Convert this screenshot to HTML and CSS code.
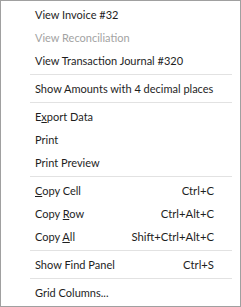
FILE: index.html
```html
<!DOCTYPE html>
<html>
<head>
<meta charset="utf-8">
<link rel="stylesheet" href="styles.css">
</head>
<body>
<div class="menu">
  <div class="item"><span>View Invoice #32</span></div>
  <div class="item disabled"><span>View Reconciliation</span></div>
  <div class="item"><span>View Transaction Journal #320</span></div>
  <div class="sep"></div>
  <div class="item"><span>Show Amounts with 4 decimal places</span></div>
  <div class="sep"></div>
  <div class="item"><span>E<u>x</u>port Data</span></div>
  <div class="item"><span>Print</span></div>
  <div class="item"><span>Print Preview</span></div>
  <div class="sep"></div>
  <div class="item"><span><u>C</u>opy Cell</span><span class="key">Ctrl+C</span></div>
  <div class="item"><span>Copy <u>R</u>ow</span><span class="key">Ctrl+Alt+C</span></div>
  <div class="item"><span>Copy <u>A</u>ll</span><span class="key">Shift+Ctrl+Alt+C</span></div>
  <div class="sep"></div>
  <div class="item"><span>Show Find Panel</span><span class="key">Ctrl+S</span></div>
  <div class="sep"></div>
  <div class="item"><span>Grid Columns...</span></div>
</div>
</body>
</html>
```
FILE: styles.css
```css
html, body {
  margin: 0;
  padding: 0;
  background: #ffffff;
}
.menu {
  box-sizing: border-box;
  width: 241px;
  height: 307px;
  border: 1px solid #a0a0a0;
  padding: 2px 0;
  background: #ffffff;
  font-family: Lato, "Liberation Sans", Arial, sans-serif;
  font-size: 11px;
  color: #1e1e1e;
}
.item {
  height: 23px;
  line-height: 23px;
  padding: 0 26px 0 34px;
  display: flex;
  justify-content: space-between;
  white-space: nowrap;
}
.key {
  font-size: 11.3px;
}
.item u {
  text-decoration: underline;
  text-underline-offset: 1px;
}
.disabled {
  color: #a3a3a3;
}
.sep {
  height: 1px;
  margin: 2px 8px 2px 29px;
  background: #e2e2e2;
}
```
